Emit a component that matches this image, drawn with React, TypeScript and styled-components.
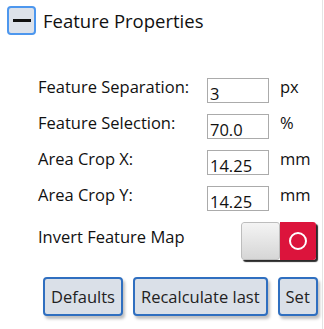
import * as React from 'react'
import styled, { createGlobalStyle } from 'styled-components'

const Global = createGlobalStyle`
  html, body {
    margin: 0;
    padding: 0;
    background: #fff;
  }
  body {
    font-family: 'Open Sans', 'Noto Sans', sans-serif;
    color: #111;
  }
`

const Panel = styled.div`
  width: 323px;
  height: 329px;
  box-sizing: border-box;
  border-right: 1px solid #e4e4e4;
  display: flex;
  flex-direction: column;
`

const Header = styled.div`
  display: flex;
  align-items: center;
  gap: 7px;
  padding: 5px 0 0 7px;
  height: 30px;
`

const Expander = styled.button`
  width: 29px;
  height: 29px;
  box-sizing: border-box;
  border: 2px solid #4d97ee;
  border-radius: 4px;
  background: #dde2ea;
  padding: 0;
  display: flex;
  align-items: center;
  justify-content: center;

  &::before {
    content: '';
    width: 18px;
    height: 3px;
    background: #111;
  }
`

const Title = styled.h2`
  margin: 0;
  font-size: 18.5px;
  font-weight: 400;
`

const Fields = styled.div`
  display: grid;
  grid-template-columns: 158px 62px auto;
  grid-auto-rows: 25px;
  column-gap: 11px;
  row-gap: 11px;
  padding: 43px 0 0 38px;
`

const Label = styled.div`
  font-size: 16.5px;
  line-height: 18px;
`

const Input = styled.input`
  width: 62px;
  height: 25px;
  box-sizing: border-box;
  border: 1px solid #ababab;
  font: inherit;
  font-size: 16.5px;
  padding: 5px 2px 0;
  line-height: 18px;
  color: #111;
  outline: none;
`

const Unit = styled.div`
  font-size: 16.5px;
  line-height: 18px;
`

const ToggleRow = styled.div`
  display: flex;
  align-items: flex-start;
  justify-content: space-between;
  height: 38px;
  padding: 11px 6px 0 38px;
`

const ToggleLabel = styled.div`
  font-size: 16.5px;
  line-height: 20px;
  padding-top: 5px;
`

const Toggle = styled.div`
  display: flex;
  width: 75px;
  height: 38px;
  border-radius: 3px;
  box-shadow: 2px 2px 1px #2a2a2a;
  overflow: hidden;
`

const Thumb = styled.div`
  flex: 1;
  background: linear-gradient(#f4f4f4, #d6d6d6);
  border: 1px solid #bdbdbd;
  border-radius: 3px;
`

const Track = styled.div`
  flex: 1;
  background: #dc143c;
  display: flex;
  align-items: center;
  justify-content: center;

  &::after {
    content: '';
    width: 14px;
    height: 14px;
    border: 2px solid #fff;
    border-radius: 50%;
  }
`

const Buttons = styled.div`
  display: flex;
  gap: 10px;
  padding: 17px 0 0 43px;
`

const Button = styled.button`
  height: 39px;
  box-sizing: border-box;
  border: 2px solid #2f6fc0;
  border-radius: 4px;
  background: #dae0e8;
  box-shadow: 2px 3px 3px rgba(0, 0, 0, 0.25);
  font-family: inherit;
  font-size: 16.5px;
  color: #222;
  padding: 0 6px;
  margin: 0;
`

const fields = [
  { label: 'Feature Separation:', value: '3', unit: 'px' },
  { label: 'Feature Selection:', value: '70.0', unit: '%' },
  { label: 'Area Crop X:', value: '14.25', unit: 'mm' },
  { label: 'Area Crop Y:', value: '14.25', unit: 'mm' },
]

export default function App() {
  return (
    <>
      <Global />
      <Panel>
        <Header>
          <Expander aria-label="collapse" />
          <Title>Feature Properties</Title>
        </Header>
        <Fields>
          {fields.map(f => (
            <React.Fragment key={f.label}>
              <Label>{f.label}</Label>
              <Input defaultValue={f.value} />
              <Unit>{f.unit}</Unit>
            </React.Fragment>
          ))}
        </Fields>
        <ToggleRow>
          <ToggleLabel>Invert Feature Map</ToggleLabel>
          <Toggle>
            <Thumb />
            <Track />
          </Toggle>
        </ToggleRow>
        <Buttons>
          <Button>Defaults</Button>
          <Button>Recalculate last</Button>
          <Button>Set</Button>
        </Buttons>
      </Panel>
    </>
  )
}
